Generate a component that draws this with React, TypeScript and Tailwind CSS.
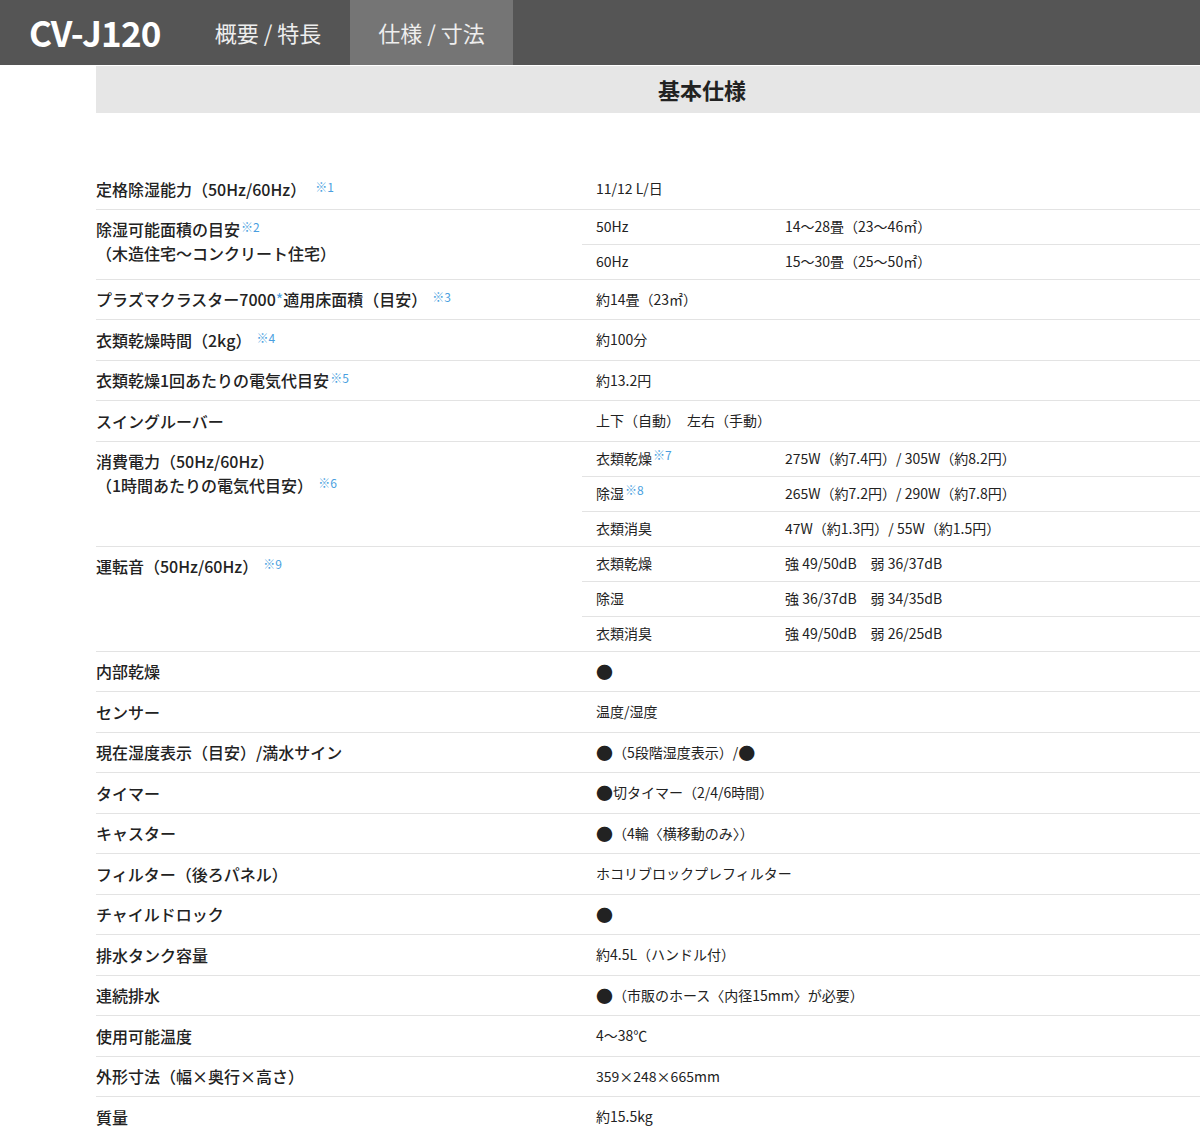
import React from "react";

const F = { fontFamily: '"Noto Sans CJK JP", "Noto Sans", sans-serif' };

const N = ({ t }: { t: string }) => (
  <sup className="text-[12px] text-[#4a9fe0] font-normal relative -top-[4px] ml-[1px]">{t}</sup>
);

type Row = { label: React.ReactNode; value?: React.ReactNode; subs?: [React.ReactNode, React.ReactNode][] };

const dot = <span className="text-[17px] leading-none">●</span>;

const rows: Row[] = [
  { label: <>定格除湿能力（50Hz/60Hz）<span className="ml-2"><N t="※1" /></span></>, value: "11/12 L/日" },
  { label: <>除湿可能面積の目安<N t="※2" /><br />（木造住宅〜コンクリート住宅）</>, subs: [["50Hz", "14〜28畳（23〜46㎡）"], ["60Hz", "15〜30畳（25〜50㎡）"]] },
  { label: <>プラズマクラスター7000<span className="text-[#4a9fe0] font-normal">*</span>適用床面積（目安）<span className="ml-1"><N t="※3" /></span></>, value: "約14畳（23㎡）" },
  { label: <>衣類乾燥時間（2kg）<span className="ml-1"><N t="※4" /></span></>, value: "約100分" },
  { label: <>衣類乾燥1回あたりの電気代目安<N t="※5" /></>, value: "約13.2円" },
  { label: "スイングルーバー", value: <>上下（自動）　左右（手動）</> },
  { label: <>消費電力（50Hz/60Hz）<br />（1時間あたりの電気代目安）<span className="ml-1"><N t="※6" /></span></>, subs: [[<>衣類乾燥<N t="※7" /></>, "275W（約7.4円）/ 305W（約8.2円）"], [<>除湿<N t="※8" /></>, "265W（約7.2円）/ 290W（約7.8円）"], ["衣類消臭", "47W（約1.3円）/ 55W（約1.5円）"]] },
  { label: <>運転音（50Hz/60Hz）<span className="ml-1"><N t="※9" /></span></>, subs: [["衣類乾燥", "強 49/50dB　弱 36/37dB"], ["除湿", "強 36/37dB　弱 34/35dB"], ["衣類消臭", "強 49/50dB　弱 26/25dB"]] },
  { label: "内部乾燥", value: dot },
  { label: "センサー", value: "温度/湿度" },
  { label: "現在湿度表示（目安）/満水サイン", value: <>{dot}（5段階湿度表示）/{dot}</> },
  { label: "タイマー", value: <>{dot}切タイマー（2/4/6時間）</> },
  { label: "キャスター", value: <>{dot}（4輪〈横移動のみ〉）</> },
  { label: "フィルター（後ろパネル）", value: "ホコリブロックプレフィルター" },
  { label: "チャイルドロック", value: dot },
  { label: "排水タンク容量", value: "約4.5L（ハンドル付）" },
  { label: "連続排水", value: <>{dot}（市販のホース〈内径15mm〉が必要）</> },
  { label: "使用可能温度", value: "4〜38℃" },
  { label: "外形寸法（幅×奥行×高さ）", value: "359×248×665mm" },
  { label: "質量", value: "約15.5kg" },
];

export default function App() {
  return (
    <div style={F} className="w-[1200px] h-[1133px] overflow-hidden bg-white text-[#222]">
      <div className="h-[65px] bg-[#555555] flex items-stretch">
        <div className="pl-[29px] w-[186px] flex items-center text-white text-[35px] font-bold tracking-tight">CV-J120</div>
        <div className="w-[164px] flex items-center justify-center text-[22px] text-[#eee]">概要 / 特長</div>
        <div className="w-[163px] flex items-center justify-center text-[22px] text-[#eee] bg-[#757575]">仕様 / 寸法</div>
      </div>
      <div className="ml-[96px] mt-[1px] h-[47px] bg-[#e6e6e6] flex items-center justify-center pl-[108px] text-[22px] font-bold">基本仕様</div>
      <div className="ml-[96px] mt-[56px]">
        {rows.map((r, i) => (
          <div key={i} className={`flex ${i === rows.length - 1 ? "border-b border-[#333]" : "border-b border-[#e3e3e3]"}`}>
            <div className={`w-[486px] text-[16px] font-medium leading-6 ${r.subs ? "pt-[7px]" : "flex items-center"}`}>
              <span>{r.label}</span>
            </div>
            <div className="flex-1 text-[14px]">
              {r.subs ? (
                r.subs.map((s, j) => (
                  <div key={j} className={`flex ${j === 0 ? "h-[34px]" : "h-[35px] border-t border-[#e3e3e3]"} items-center pl-[14px]`}>
                    <div className="w-[189px]">{s[0]}</div>
                    <div>{s[1]}</div>
                  </div>
                ))
              ) : (
                <div className="h-[39.5px] flex items-center pl-[14px]">{r.value}</div>
              )}
            </div>
          </div>
        ))}
      </div>
    </div>
  );
}
